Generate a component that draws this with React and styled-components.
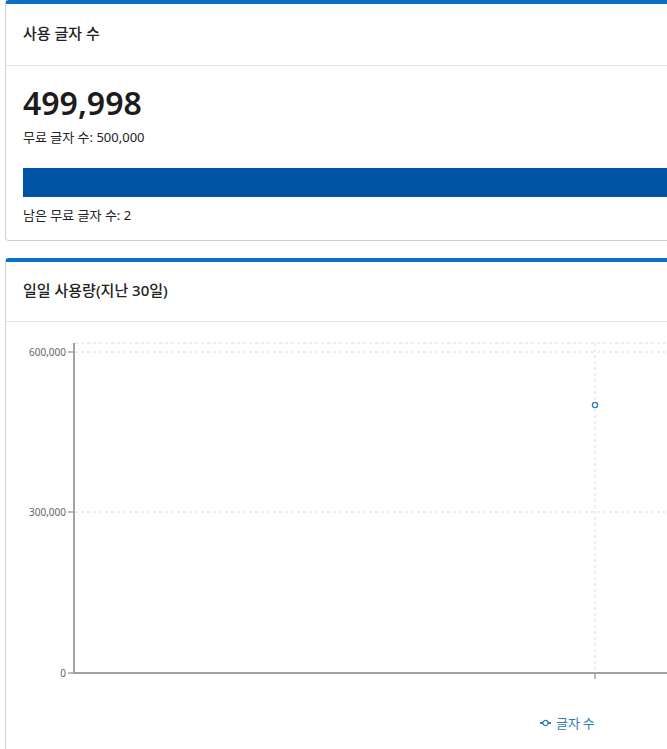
import styled, { createGlobalStyle } from "styled-components";

const Global = createGlobalStyle`
  html, body {
    margin: 0;
    padding: 0;
    overflow: hidden;
    background: #fff;
  }
  body {
    font-family: "Noto Sans", "Noto Sans CJK KR", sans-serif;
    color: #222;
  }
`;

const Page = styled.div`
  padding: 0 0 0 5px;
  width: 760px;
`;

const Card = styled.section`
  background: #fff;
  border: 1px solid #cfcfcf;
  border-top: 4px solid #0a70c6;
  border-radius: 4px;
  margin-bottom: ${(p) => p.$gap || 0}px;
`;

const CardHead = styled.header`
  height: ${(p) => p.$h}px;
  box-sizing: border-box;
  display: flex;
  align-items: center;
  padding: 0 17px 4px;
  border-bottom: 1px solid #e2e2e2;
  font-size: 15px;
  font-weight: 500;
  color: #222;
`;

const CardBody = styled.div`
  padding: 16px 0 16px 17px;
`;

const BigNumber = styled.div`
  font-size: 32px;
  font-weight: 600;
  line-height: 42px;
  color: #1c1c1c;
  margin-bottom: 4px;
`;

const Note = styled.div`
  font-size: 13px;
  line-height: 18px;
  color: #222;
`;

const Bar = styled.div`
  height: 29px;
  background: #0054a6;
  margin: 22px 0 9px;
`;

const ChartWrap = styled.div`
  padding: 0;
`;

const AXIS = "#a3a3a3";
const GRID = "#dcdcdc";
const LINE = "#2f7db5";

const ticks = [
  { v: "600,000", y: 30 },
  { v: "300,000", y: 190 },
  { v: "0", y: 351 },
];

const Chart = () => (
  <svg width="720" height="440" style={{ display: "block" }}>
    <line x1="69" y1="21" x2="720" y2="21" stroke={GRID} strokeDasharray="3 3" />
    {ticks.slice(0, 2).map((t) => (
      <line key={t.v} x1="69" y1={t.y} x2="720" y2={t.y} stroke={GRID} strokeDasharray="3 3" />
    ))}
    <line x1="589" y1="21" x2="589" y2="351" stroke={GRID} strokeDasharray="3 3" />
    <line x1="68" y1="21" x2="68" y2="352" stroke={AXIS} strokeWidth="2" />
    <line x1="68" y1="351" x2="720" y2="351" stroke={AXIS} strokeWidth="2" />
    {ticks.map((t) => (
      <g key={t.v}>
        <line x1="62" y1={t.y} x2="67" y2={t.y} stroke="#777" />
        <text x="60" y={t.y} dy="3.5" textAnchor="end" fontSize="10" fill="#666" fontFamily="Noto Sans, sans-serif">
          {t.v}
        </text>
      </g>
    ))}
    <line x1="589" y1="352" x2="589" y2="357" stroke="#777" />
    <circle cx="589" cy="83" r="2.6" fill="#fff" stroke={LINE} strokeWidth="1.3" />
    <g transform="translate(534 401)">
      <line x1="0" y1="0" x2="11" y2="0" stroke={LINE} strokeWidth="2" />
      <circle cx="5.5" cy="0" r="2.6" fill="#fff" stroke={LINE} strokeWidth="1.3" />
      <text x="16" y="0" dy="4.5" fontSize="13" fill={LINE} fontFamily="Noto Sans CJK KR, sans-serif">
        글자 수
      </text>
    </g>
  </svg>
);

export default function App() {
  return (
    <Page>
      <Global />
      <Card $gap={17}>
        <CardHead $h={62}>사용 글자 수</CardHead>
        <CardBody>
          <BigNumber>499,998</BigNumber>
          <Note>무료 글자 수: 500,000</Note>
          <Bar />
          <Note>남은 무료 글자 수: 2</Note>
        </CardBody>
      </Card>
      <Card>
        <CardHead $h={60}>일일 사용량(지난 30일)</CardHead>
        <ChartWrap>
          <Chart />
        </ChartWrap>
      </Card>
    </Page>
  );
}
